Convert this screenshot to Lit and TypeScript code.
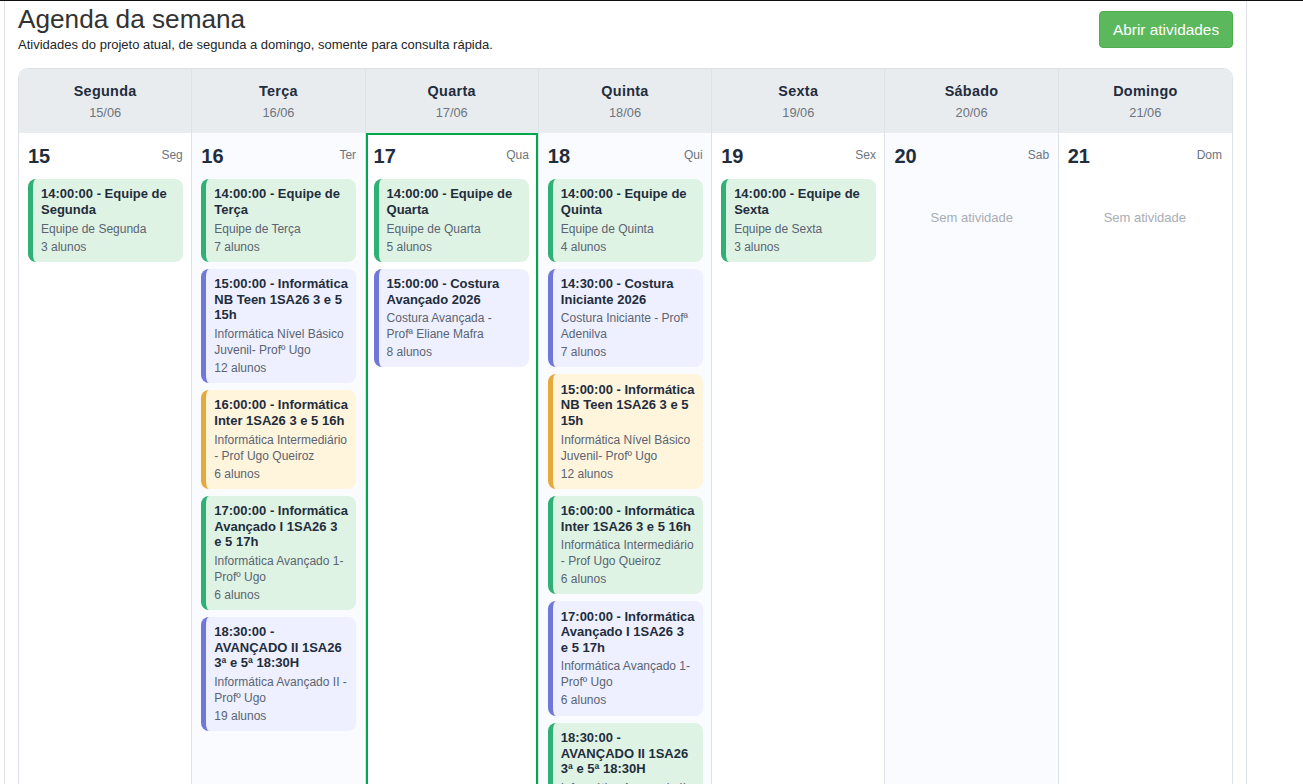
import { LitElement, html, css } from 'lit';
import { customElement } from 'lit/decorators.js';

type Tone = 'green' | 'blue' | 'yellow';

interface Activity {
  title: string;
  sub: string;
  count: string;
  tone: Tone;
}

interface Day {
  name: string;
  date: string;
  num: string;
  short: string;
  today?: boolean;
  items: Activity[];
}

const equipe = (name: string, count: string): Activity => ({
  title: `14:00:00 - Equipe de ${name}`,
  sub: `Equipe de ${name}`,
  count,
  tone: 'green',
});

const nbTeen = (tone: Tone): Activity => ({
  title: '15:00:00 - Informática NB Teen 1SA26 3 e 5 15h',
  sub: 'Informática Nível Básico Juvenil- Profº Ugo',
  count: '12 alunos',
  tone,
});

const inter = (tone: Tone): Activity => ({
  title: '16:00:00 - Informática Inter 1SA26 3 e 5 16h',
  sub: 'Informática Intermediário - Prof Ugo Queiroz',
  count: '6 alunos',
  tone,
});

// nbsp keeps the last words together so the lines break as in the original
const avancado = (tone: Tone): Activity => ({
  title: '17:00:00 - Informática Avançado I 1SA26 3 e\u00a05\u00a017h',
  sub: 'Informática Avançado 1- Profº Ugo',
  count: '6 alunos',
  tone,
});

const avancado2 = (tone: Tone): Activity => ({
  title: '18:30:00 - AVANÇADO II 1SA26 3ª e 5ª 18:30H',
  sub: 'Informática Avançado II - Profº Ugo',
  count: '19 alunos',
  tone,
});

const days: Day[] = [
  { name: 'Segunda', date: '15/06', num: '15', short: 'Seg', items: [equipe('Segunda', '3 alunos')] },
  {
    name: 'Terça',
    date: '16/06',
    num: '16',
    short: 'Ter',
    items: [equipe('Terça', '7 alunos'), nbTeen('blue'), inter('yellow'), avancado('green'), avancado2('blue')],
  },
  {
    name: 'Quarta',
    date: '17/06',
    num: '17',
    short: 'Qua',
    today: true,
    items: [
      equipe('Quarta', '5 alunos'),
      {
        title: '15:00:00 - Costura Avançado 2026',
        sub: 'Costura Avançada - Profª\u00a0Eliane Mafra',
        count: '8 alunos',
        tone: 'blue',
      },
    ],
  },
  {
    name: 'Quinta',
    date: '18/06',
    num: '18',
    short: 'Qui',
    items: [
      equipe('Quinta', '4 alunos'),
      {
        title: '14:30:00 - Costura Iniciante 2026',
        sub: 'Costura Iniciante - Profª Adenilva',
        count: '7 alunos',
        tone: 'blue',
      },
      nbTeen('yellow'),
      inter('green'),
      avancado('blue'),
      avancado2('green'),
    ],
  },
  { name: 'Sexta', date: '19/06', num: '19', short: 'Sex', items: [equipe('Sexta', '3 alunos')] },
  { name: 'Sábado', date: '20/06', num: '20', short: 'Sab', items: [] },
  { name: 'Domingo', date: '21/06', num: '21', short: 'Dom', items: [] },
];

@customElement('app-root')
export class AppRoot extends LitElement {
  static styles = css`
    :host {
      display: block;
      height: 784px;
      overflow: hidden;
      background: #fff;
      border-top: 1px solid #111;
      box-sizing: border-box;
      font-family: 'Liberation Sans', Arial, sans-serif;
      color: #333;
    }

    .page {
      width: 1243px;
      height: 100%;
      margin-left: 4px;
      padding: 0 13px;
      box-sizing: border-box;
      border-left: 1px solid #dee2e6;
      border-right: 1px solid #dee2e6;
    }

    .head {
      display: flex;
      justify-content: space-between;
      align-items: flex-start;
      height: 67px;
    }

    h1 {
      margin: 3px 0 0;
      font-size: 26.2px;
      line-height: 30px;
      font-weight: 400;
      color: #333;
    }

    .lead {
      margin: 3px 0 0;
      font-size: 13px;
      line-height: 16px;
      color: #212529;
    }

    .btn {
      margin-top: 10px;
      padding: 0 13px;
      height: 37px;
      width: 134px;
      border: 1px solid #4cae4c;
      border-radius: 4px;
      background: #5cb85c;
      color: #fff;
      font-family: inherit;
      font-size: 15.4px;
      white-space: nowrap;
    }

    .week {
      display: grid;
      grid-template-columns: repeat(7, 1fr);
      border: 1px solid #dee2e6;
      border-bottom: 0;
      border-radius: 10px 10px 0 0;
      overflow: hidden;
      height: 800px;
    }

    .col {
      display: flex;
      flex-direction: column;
      border-right: 1px solid #dee2e6;
      min-width: 0;
    }

    .col:last-child {
      border-right: 0;
    }

    .col-head {
      height: 64px;
      box-sizing: border-box;
      padding-top: 14px;
      background: #e9ecef;
      text-align: center;
    }

    .col-name {
      font-size: 14.4px;
      line-height: 16px;
      font-weight: 700;
      letter-spacing: 0.3px;
      color: #1f2d3d;
    }

    .col-date {
      margin-top: 7px;
      font-size: 12.8px;
      line-height: 14px;
      color: #6c757d;
    }

    .cell {
      flex: 1;
      padding: 10px 8.5px 10px 9px;
      background: #fff;
    }

    .col:nth-child(even) .cell {
      background: #fafbff;
    }

    .col:last-child .cell {
      padding-right: 10px;
    }

    .today .cell {
      padding: 8px 7px 8px 6px;
      border: 2px solid #00a94f;
      background: #fff;
    }

    .cell-top {
      display: flex;
      justify-content: space-between;
      align-items: flex-start;
      height: 36px;
    }

    .num {
      margin-top: 1px;
      font-size: 20px;
      line-height: 24px;
      font-weight: 700;
      color: #1f2d3d;
    }

    .short {
      margin-top: 5px;
      font-size: 12px;
      line-height: 14px;
      color: #6c757d;
    }

    .list {
      display: flex;
      flex-direction: column;
      gap: 7px;
    }

    .card {
      padding: 7.4px 6px 7.1px 8px;
      border-left: 5px solid;
      border-radius: 8px;
    }

    .green {
      background: #dff3e4;
      border-left-color: #2fb074;
    }

    .blue {
      background: #eef0ff;
      border-left-color: #6f78d8;
    }

    .yellow {
      background: #fff4dc;
      border-left-color: #e5a93c;
    }

    .title {
      font-size: 13px;
      line-height: 15.6px;
      font-weight: 700;
      color: #1f2d3d;
    }

    .sub {
      margin-top: 3px;
      font-size: 12px;
      line-height: 16px;
      color: #5a6472;
    }

    .count {
      margin-top: 2px;
      font-size: 12px;
      line-height: 16px;
      color: #5a6472;
    }

    .empty {
      margin-top: 31px;
      text-align: center;
      font-size: 13px;
      line-height: 16px;
      color: #a7adb5;
    }
  `;

  private renderCard(a: Activity) {
    return html`
      <div class="card ${a.tone}">
        <div class="title">${a.title}</div>
        <div class="sub">${a.sub}</div>
        <div class="count">${a.count}</div>
      </div>
    `;
  }

  private renderDay(d: Day) {
    return html`
      <div class="col ${d.today ? 'today' : ''}">
        <div class="col-head">
          <div class="col-name">${d.name}</div>
          <div class="col-date">${d.date}</div>
        </div>
        <div class="cell">
          <div class="cell-top">
            <span class="num">${d.num}</span>
            <span class="short">${d.short}</span>
          </div>
          ${d.items.length
            ? html`<div class="list">${d.items.map((a) => this.renderCard(a))}</div>`
            : html`<div class="empty">Sem atividade</div>`}
        </div>
      </div>
    `;
  }

  render() {
    return html`
      <div class="page">
        <div class="head">
          <div>
            <h1>Agenda da semana</h1>
            <p class="lead">Atividades do projeto atual, de segunda a domingo, somente para consulta rápida.</p>
          </div>
          <button class="btn">Abrir atividades</button>
        </div>
        <div class="week">${days.map((d) => this.renderDay(d))}</div>
      </div>
    `;
  }
}
